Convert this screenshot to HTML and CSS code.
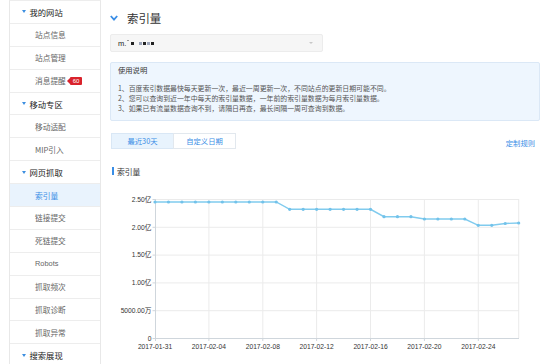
FILE: index.html
```html
<!DOCTYPE html>
<html lang="zh-CN">
<head>
<meta charset="utf-8">
<title>索引量</title>
<link rel="stylesheet" href="styles.css">
</head>
<body>
<nav class="side">
  <div class="row grp">我的网站</div>
  <div class="row item">站点信息</div>
  <div class="row item">站点管理</div>
  <div class="row item">消息提醒<span class="badge">60</span></div>
  <div class="row grp">移动专区</div>
  <div class="row item">移动适配</div>
  <div class="row item">MIP引入</div>
  <div class="row grp">网页抓取</div>
  <div class="row item active">索引量</div>
  <div class="row item">链接提交</div>
  <div class="row item">死链提交</div>
  <div class="row item latin">Robots</div>
  <div class="row item">抓取频次</div>
  <div class="row item">抓取诊断</div>
  <div class="row item">抓取异常</div>
  <div class="row grp">搜索展现</div>
</nav>
<main class="main">
  <h1 class="title">
    <svg class="chev" width="8" height="6" viewBox="0 0 8 6"><path d="M0.8 1 L4 4.6 L7.2 1" fill="none" stroke="#3a8ee6" stroke-width="1.8"/></svg>
    <span>索引量</span>
  </h1>
  <div class="select">
    <span class="site">m.</span><span class="sq dot"></span><span class="sq"></span><span class="gap"></span><span class="sq light"></span><span class="sq"></span><span class="sq light"></span><span class="sq"></span>
    <span class="caret"></span>
  </div>
  <section class="info">
    <h2 class="info-title">使用说明</h2>
    <ol class="info-list">
      <li>1、百度索引数据最快每天更新一次，最近一周更新一次，不同站点的更新日期可能不同。</li>
      <li>2、您可以查询到近一年中每天的索引量数据，一年前的索引量数据为每月索引量数据。</li>
      <li>3、如果已有流量数据查询不到，请隔日再查，最长间隔一周可查询到数据。</li>
    </ol>
  </section>
  <div class="toolbar">
    <div class="tabs">
      <span class="tab on">最近30天</span>
      <span class="tab">自定义日期</span>
    </div>
    <a class="rule">定制规则</a>
  </div>
  <h3 class="sec"><span class="bar"></span>索引量</h3>
  <svg class="chart" width="430" height="174" viewBox="0 0 430 174">
    <g stroke="#ebebeb" stroke-width="1">
      <line x1="45" y1="9.5" x2="409" y2="9.5"/>
      <line x1="45" y1="37.3" x2="409" y2="37.3"/>
      <line x1="45" y1="65.1" x2="409" y2="65.1"/>
      <line x1="45" y1="92.9" x2="409" y2="92.9"/>
      <line x1="45" y1="120.7" x2="409" y2="120.7"/>
      <line x1="98.9" y1="9" x2="98.9" y2="148"/>
      <line x1="152.8" y1="9" x2="152.8" y2="148"/>
      <line x1="206.6" y1="9" x2="206.6" y2="148"/>
      <line x1="260.5" y1="9" x2="260.5" y2="148"/>
      <line x1="314.4" y1="9" x2="314.4" y2="148"/>
      <line x1="368.3" y1="9" x2="368.3" y2="148"/>
      <line x1="408.7" y1="9" x2="408.7" y2="148"/>
    </g>
    <g stroke="#cfd6dc" stroke-width="1">
      <line x1="45.5" y1="9" x2="45.5" y2="148.5"/>
      <line x1="45" y1="148.5" x2="409" y2="148.5"/>
      <line x1="42.5" y1="9.5" x2="45" y2="9.5"/>
      <line x1="42.5" y1="37.3" x2="45" y2="37.3"/>
      <line x1="42.5" y1="65.1" x2="45" y2="65.1"/>
      <line x1="42.5" y1="92.9" x2="45" y2="92.9"/>
      <line x1="42.5" y1="120.7" x2="45" y2="120.7"/>
      <line x1="42.5" y1="148.5" x2="45" y2="148.5"/>
      <line x1="45.5" y1="148" x2="45.5" y2="151"/>
      <line x1="98.9" y1="148" x2="98.9" y2="151"/>
      <line x1="152.8" y1="148" x2="152.8" y2="151"/>
      <line x1="206.6" y1="148" x2="206.6" y2="151"/>
      <line x1="260.5" y1="148" x2="260.5" y2="151"/>
      <line x1="314.4" y1="148" x2="314.4" y2="151"/>
      <line x1="368.3" y1="148" x2="368.3" y2="151"/>
    </g>
    <g class="ylab" text-anchor="end">
      <text x="41.5" y="11.8">2.50亿</text>
      <text x="41.5" y="39.6">2.00亿</text>
      <text x="41.5" y="67.4">1.50亿</text>
      <text x="41.5" y="95.2">1.00亿</text>
      <text x="41.5" y="123">5000.00万</text>
      <text x="41.5" y="150.8">0</text>
    </g>
    <g class="xlab" text-anchor="middle">
      <text x="45" y="158.6">2017-01-31</text>
      <text x="98.9" y="158.6">2017-02-04</text>
      <text x="152.8" y="158.6">2017-02-08</text>
      <text x="206.6" y="158.6">2017-02-12</text>
      <text x="260.5" y="158.6">2017-02-16</text>
      <text x="314.4" y="158.6">2017-02-20</text>
      <text x="368.3" y="158.6">2017-02-24</text>
    </g>
    <polyline fill="none" stroke="#80cbee" stroke-width="1.4" points="45,12 58.47,12 71.94,12 85.41,12 98.88,12 112.35,12 125.82,12 139.29,12 152.76,12 166.23,12 179.7,19.3 193.17,19.3 206.64,19.3 220.11,19.3 233.58,19.3 247.05,19.3 260.52,19.3 273.99,26.7 287.46,26.7 300.93,26.7 314.4,29 327.87,29 341.34,29 354.81,29 368.28,35.3 381.75,35.3 395.22,33.5 408.69,33"/>
    <g fill="#72c2ea">
      <circle cx="45" cy="12" r="1.6"/><circle cx="58.47" cy="12" r="1.6"/><circle cx="71.94" cy="12" r="1.6"/><circle cx="85.41" cy="12" r="1.6"/><circle cx="98.88" cy="12" r="1.6"/><circle cx="112.35" cy="12" r="1.6"/><circle cx="125.82" cy="12" r="1.6"/><circle cx="139.29" cy="12" r="1.6"/><circle cx="152.76" cy="12" r="1.6"/><circle cx="166.23" cy="12" r="1.6"/>
      <circle cx="179.7" cy="19.3" r="1.6"/><circle cx="193.17" cy="19.3" r="1.6"/><circle cx="206.64" cy="19.3" r="1.6"/><circle cx="220.11" cy="19.3" r="1.6"/><circle cx="233.58" cy="19.3" r="1.6"/><circle cx="247.05" cy="19.3" r="1.6"/><circle cx="260.52" cy="19.3" r="1.6"/>
      <circle cx="273.99" cy="26.7" r="1.6"/><circle cx="287.46" cy="26.7" r="1.6"/><circle cx="300.93" cy="26.7" r="1.6"/>
      <circle cx="314.4" cy="29" r="1.6"/><circle cx="327.87" cy="29" r="1.6"/><circle cx="341.34" cy="29" r="1.6"/><circle cx="354.81" cy="29" r="1.6"/>
      <circle cx="368.28" cy="35.3" r="1.6"/><circle cx="381.75" cy="35.3" r="1.6"/><circle cx="395.22" cy="33.5" r="1.6"/><circle cx="408.69" cy="33" r="1.6"/>
    </g>
  </svg>
</main>
</body>
</html>
```
FILE: styles.css
```css
* { box-sizing: border-box; margin: 0; padding: 0; }

html, body { width: 553px; height: 364px; overflow: hidden; }

body {
  background: #fff;
  font-family: "Noto Sans CJK SC", "Noto Sans", sans-serif;
  color: #333;
  display: flex;
  align-items: flex-start;
}

/* sidebar */
.side {
  flex: none;
  margin-left: 9px;
  width: 92px;
  border-left: 1px solid #e8e8e8;
  border-right: 1px solid #e8e8e8;
  border-top: 1px solid #ededed;
}

.row {
  height: 22.9px;
  border-bottom: 1px solid #ededed;
  display: flex;
  align-items: center;
  white-space: nowrap;
}

.grp {
  padding-left: 12px;
  font-size: 8.3px;
  color: #222;
  font-weight: 400;
}

.grp::before {
  content: "";
  width: 0;
  height: 0;
  border-left: 2px solid transparent;
  border-right: 2px solid transparent;
  border-top: 3px solid #3d8fe0;
  margin-right: 3.5px;
}

.item {
  padding-left: 25px;
  font-size: 7.7px;
  color: #666;
}

.item.latin { font-family: "Liberation Sans", sans-serif; font-size: 7.4px; }

.item.active {
  background: #e9f3fd;
  color: #3a8ee6;
}

.badge {
  position: relative;
  margin-left: 4px;
  height: 8px;
  padding: 0 2.5px 0 3px;
  background: #d9232c;
  color: #fff;
  font-family: "Liberation Sans", sans-serif;
  font-size: 6px;
  line-height: 8px;
  border-radius: 1px;
}

.badge::before {
  content: "";
  position: absolute;
  left: -3px;
  top: 1px;
  border-top: 3px solid transparent;
  border-bottom: 3px solid transparent;
  border-right: 3px solid #d9232c;
}

/* main */
.main {
  flex: 1;
  padding: 0 13px 0 9px;
  min-width: 0;
}

.title {
  margin-top: 11px;
  height: 14px;
  display: flex;
  align-items: center;
  gap: 9px;
  font-size: 11.4px;
  font-weight: 400;
  color: #333;
}

.chev { flex: none; }

.select {
  margin-top: 9px;
  width: 213px;
  height: 18px;
  background: #f6f6f6;
  border: 1px solid #ececec;
  border-radius: 2px;
  display: flex;
  align-items: center;
  padding-left: 7px;
  position: relative;
}

.site {
  font-family: "Liberation Sans", sans-serif;
  font-size: 7.5px;
  color: #222;
  margin-right: 1px;
}

.sq {
  width: 3px;
  height: 3px;
  background: #222;
  margin-right: 1px;
}

.sq.dot { width: 1.5px; height: 1.5px; background: #999; margin-top: -5px; margin-right: 2px; }
.sq.light { background: #9aa3b8; }
.gap { width: 4px; }

.caret {
  position: absolute;
  right: 9px;
  top: 7px;
  border-left: 2.5px solid transparent;
  border-right: 2.5px solid transparent;
  border-top: 2.5px solid #c8c8c8;
}

.info {
  margin-top: 10px;
  height: 59px;
  background: #eef6fe;
  border: 1px solid #dbe8f6;
  border-radius: 2px;
  padding: 2px 7px 0;
}

.info-title {
  font-size: 7.3px;
  line-height: 10px;
  font-weight: 400;
  color: #333;
}

.info-list {
  list-style: none;
  margin-top: 7.7px;
  font-size: 6.9px;
  line-height: 10px;
  color: #555;
  white-space: nowrap;
}

.toolbar {
  margin-top: 12px;
  height: 16px;
  display: flex;
  justify-content: space-between;
  align-items: flex-start;
}

.tabs { display: flex; margin-left: 1px; }

.tab {
  height: 16px;
  width: 63px;
  display: flex;
  align-items: center;
  justify-content: center;
  font-size: 7.3px;
  color: #3a8ee6;
  border: 1px solid #e2e8ee;
  background: #fff;
}

.tab.on {
  width: 62px;
  background: #e8f3fd;
  border-color: #d9e7f5;
  border-right: none;
}

.rule {
  margin-top: 6px;
  margin-right: 5px;
  font-size: 7.3px;
  line-height: 9px;
  color: #3a8ee6;
}

.sec {
  margin-top: 17px;
  height: 10px;
  display: flex;
  align-items: center;
  gap: 3px;
  font-size: 7.8px;
  font-weight: 400;
  color: #333;
}

.bar {
  width: 2.4px;
  height: 8px;
  margin-left: 1.6px;
  background: #3a8ee6;
}

.chart {
  display: block;
  margin-top: 14px;
}

.chart text {
  font-family: "Liberation Sans", "Noto Sans CJK SC", sans-serif;
  font-size: 6.7px;
  fill: #333;
}
```
